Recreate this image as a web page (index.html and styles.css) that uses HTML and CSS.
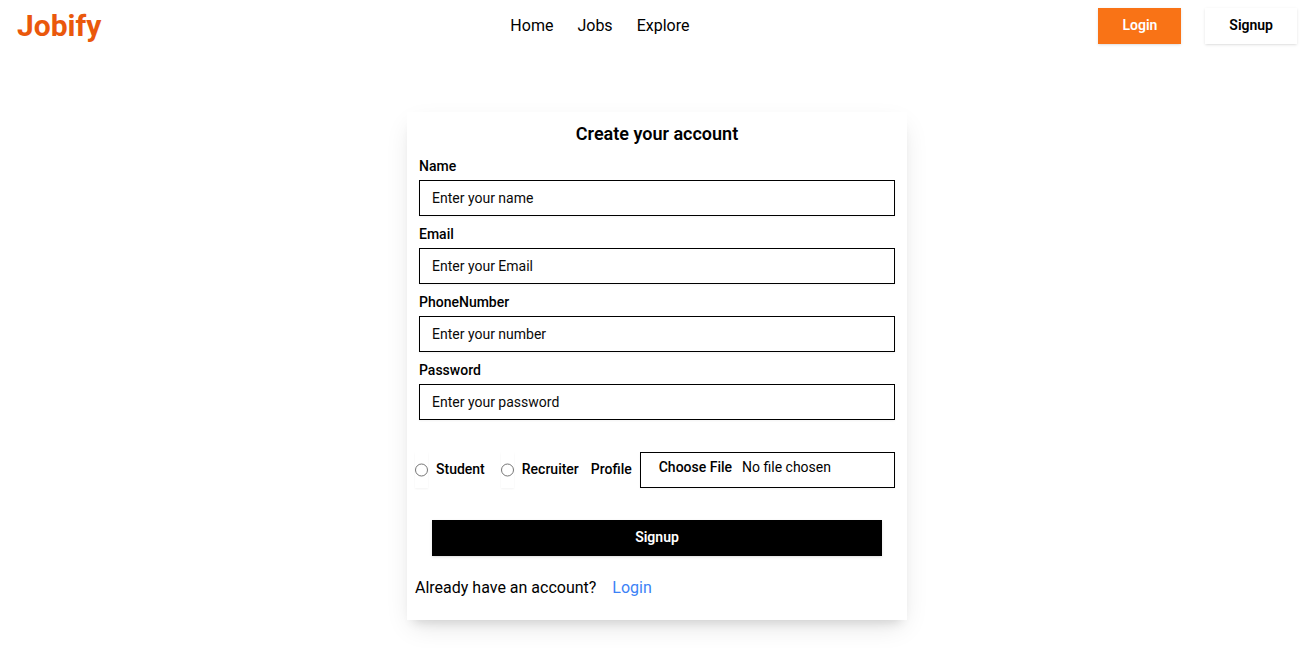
FILE: index.html
```html
<!DOCTYPE html>
<html lang="en">
<head>
<meta charset="utf-8">
<meta name="viewport" content="width=device-width, initial-scale=1">
<title>Jobify</title>
<link rel="stylesheet" href="styles.css">
</head>
<body>
<header class="navbar">
  <h1 class="brand">Jobify</h1>
  <nav class="nav-links">
    <a href="#">Home</a>
    <a href="#">Jobs</a>
    <a href="#">Explore</a>
  </nav>
  <div class="nav-actions">
    <button class="btn btn-orange" type="button">Login</button>
    <button class="btn btn-white" type="button">Signup</button>
  </div>
</header>
<main class="page">
  <form class="card">
    <h2 class="card-title">Create your account</h2>
    <div class="field">
      <label for="name">Name</label>
      <input class="input" id="name" type="text" placeholder="Enter your name">
    </div>
    <div class="field">
      <label for="email">Email</label>
      <input class="input" id="email" type="email" placeholder="Enter your Email">
    </div>
    <div class="field">
      <label for="phone">PhoneNumber</label>
      <input class="input" id="phone" type="text" placeholder="Enter your number">
    </div>
    <div class="field">
      <label for="password">Password</label>
      <input class="input" id="password" type="password" placeholder="Enter your password">
    </div>
    <div class="options">
      <div class="choice">
        <input class="radio" id="student" type="radio" name="role">
        <label for="student">Student</label>
      </div>
      <div class="choice">
        <input class="radio" id="recruiter" type="radio" name="role">
        <label for="recruiter">Recruiter</label>
      </div>
      <div class="profile">
        <label for="profile">Profile</label>
        <input class="input file" id="profile" type="file">
      </div>
    </div>
    <button class="btn btn-black" type="submit">Signup</button>
    <p class="switch">Already have an account? <a href="#">Login</a></p>
  </form>
</main>
</body>
</html>
```
FILE: styles.css
```css
*,
*::before,
*::after {
  box-sizing: border-box;
}

body {
  margin: 0;
  background: #fff;
  color: #000;
  font: 400 16px/24px Roboto, "Liberation Sans", sans-serif;
}

h1,
h2,
p {
  margin: 0;
}

a {
  color: inherit;
  text-decoration: none;
}

button,
input {
  font: inherit;
  color: inherit;
}

.navbar {
  display: grid;
  grid-template-columns: auto auto auto;
  justify-content: space-between;
  align-items: start;
  padding: 8px 18px 8px 17px;
}

.brand {
  color: #ea580c;
  font-size: 30px;
  line-height: 36px;
  font-weight: 700;
}

.nav-links {
  display: flex;
  gap: 24px;
  padding: 6px 0;
}

.nav-actions {
  display: flex;
  gap: 24px;
}

.btn {
  height: 36px;
  padding: 7px 24px 9px;
  border: 0;
  font-size: 14px;
  line-height: 20px;
  font-weight: 600;
  box-shadow: 0 1px 3px rgb(0 0 0 / 10%), 0 1px 2px -1px rgb(0 0 0 / 10%);
}

.btn-orange {
  background: #f97316;
  color: #fff;
}

.btn-white {
  background: #fff;
}

.btn-black {
  display: block;
  width: 450px;
  max-width: 100%;
  margin: 32px auto 0;
  background: #000;
  color: #fff;
}

.page {
  display: flex;
  justify-content: center;
  padding: 60px 9px 28px 8px;
}

.card {
  width: 500px;
  max-width: 100%;
  padding: 8px 8px 20px;
  box-shadow: 0 10px 25px -5px rgb(0 0 0 / 12%), 0 8px 10px -6px rgb(0 0 0 / 12%);
}

.card-title {
  font-size: 18px;
  line-height: 28px;
  font-weight: 600;
  text-align: center;
}

label {
  font-size: 14px;
  line-height: 14px;
  font-weight: 500;
}

.field {
  padding: 4px 4px 0;
}

.field label {
  display: block;
  padding: 7px 0;
}

.input {
  display: block;
  width: 100%;
  height: 36px;
  padding: 4px 12px;
  border: 1px solid #000;
  border-radius: 0;
  background: transparent;
  font-size: 14px;
  line-height: 20px;
  box-shadow: 0 1px 2px rgb(0 0 0 / 5%);
}

.input::placeholder {
  color: #0a0a0a;
  opacity: 1;
}

.options {
  display: flex;
  align-items: center;
  margin-top: 32px;
  padding-right: 4px;
}

.choice {
  display: flex;
  align-items: center;
  gap: 8px;
  margin-right: 16px;
}

.choice + .profile {
  margin-left: -4px;
}

.options label {
  padding-bottom: 2px;
}

.radio {
  width: 13px;
  height: 36px;
  margin: 0;
  box-shadow: 0 1px 2px rgb(0 0 0 / 5%);
}

.profile {
  display: flex;
  flex: 1;
  align-items: center;
  gap: 8px;
}

.file {
  padding-top: 3px;
}

.file::file-selector-button {
  border: 0;
  background: transparent;
  color: #000;
  font: 500 14px/20px Roboto, "Liberation Sans", sans-serif;
}

.switch {
  padding-top: 20px;
}

.switch a {
  margin-left: 12px;
  color: #3b82f6;
}
```
